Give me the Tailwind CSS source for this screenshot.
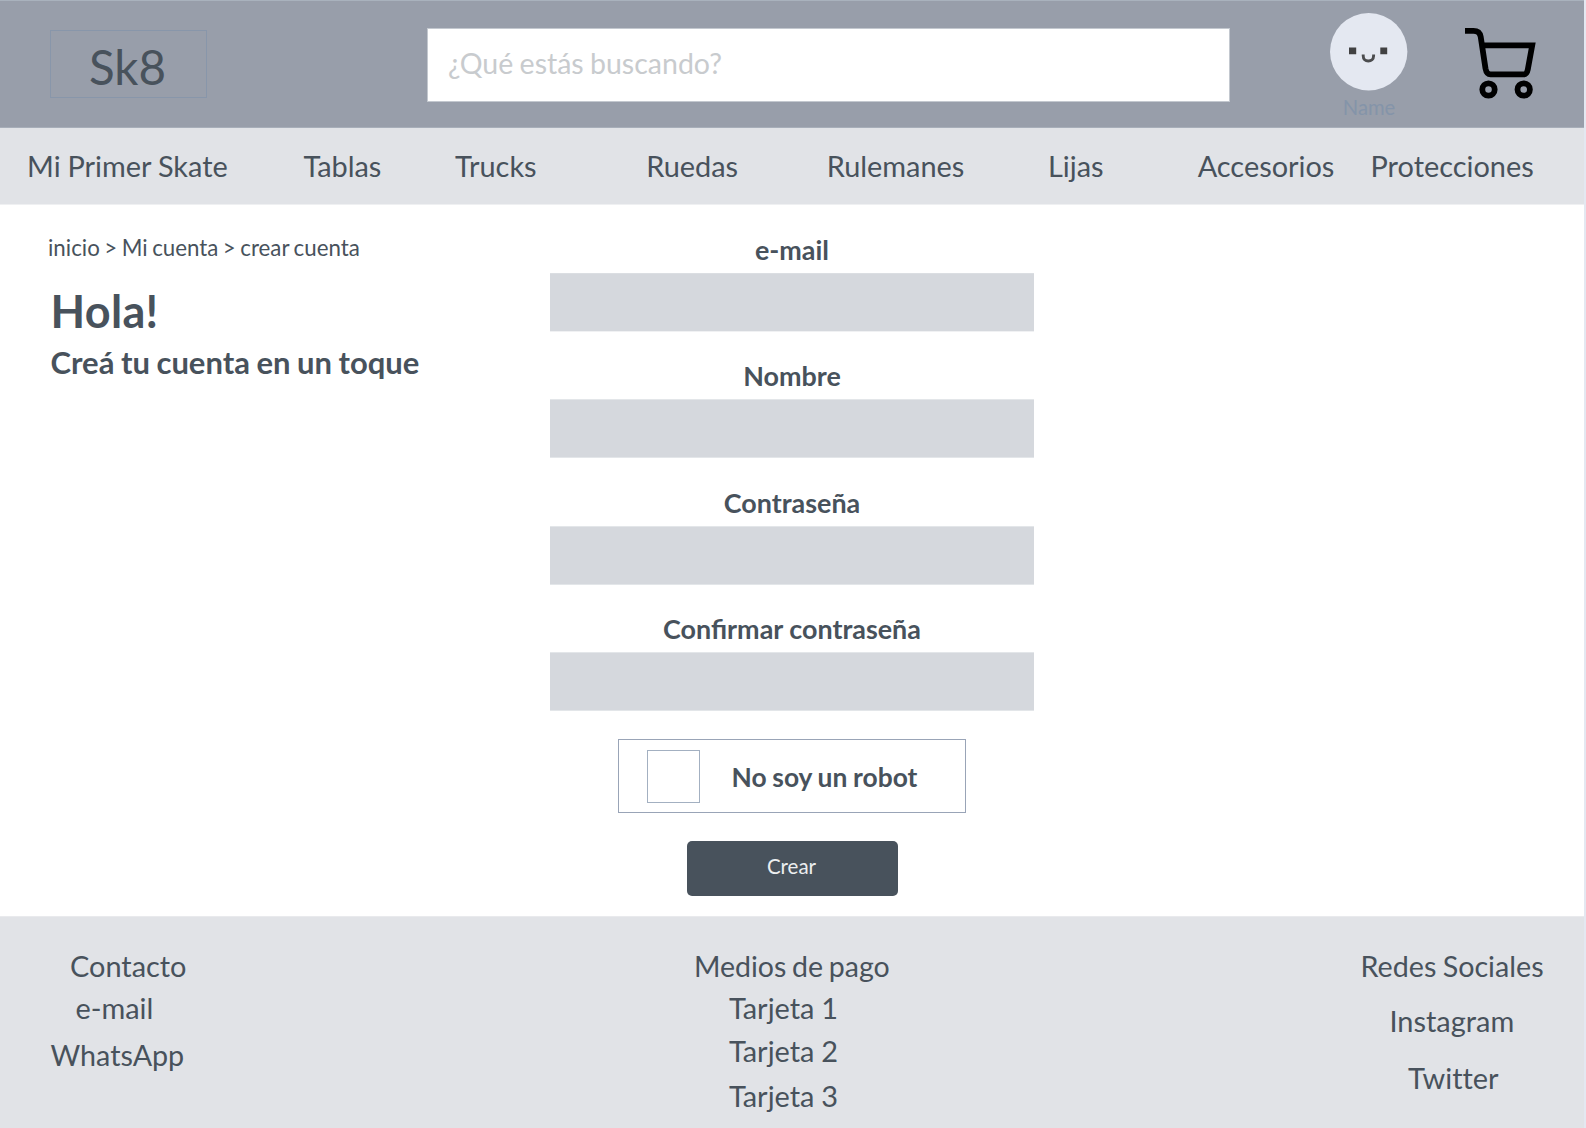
<!DOCTYPE html>
<html lang="es">
<head>
<meta charset="utf-8">
<title>Sk8 - Crear cuenta</title>
<script src="https://cdn.jsdelivr.net/npm/@tailwindcss/browser@4"></script>
</head>
<body class="h-[1128px] w-[1586px] overflow-hidden bg-[#e4e8f1] font-['Lato',sans-serif] text-[#48525c]">
<div class="flex h-full w-[1584px] flex-col bg-white">

  <header class="flex h-[128px] shrink-0 items-start border-y border-t-[#a9b2bd] border-b-[#a7aeb9] bg-[#989eaa]">
    <a class="mt-[29px] ml-[50px] flex h-[68px] w-[157px] items-center justify-center border border-[#8896aa] pt-[5px] pr-[2px] text-[47.5px] leading-none">Sk8</a>
    <div class="mt-[27px] ml-[220px] flex h-[74px] w-[803px] items-center border border-[#c3c8cf] bg-white pb-[3px] pl-[20px] text-[28.5px] leading-none whitespace-nowrap text-[#c8cbce] [word-spacing:-1px]">¿Qué estás buscando?</div>
    <div class="mt-[12px] ml-[100px] flex w-[78px] flex-col items-center">
      <svg class="size-[78px]" viewBox="0 0 78 78" fill="none">
        <circle cx="38.7" cy="38.7" r="38.7" fill="#e4e8f1"/>
        <path d="M19 34.5h7.2v6.7H19zM50.3 34.5h6.9v6.7h-6.9z" fill="#414142"/>
        <path d="M33.200 41.500v1.200c0 3.400 2.200 5.300 5.100 5.300s5.300-1.900 5.300-5.300v-1.200" stroke="#4b4c4e" stroke-width="2.900"/>
      </svg>
      <span class="mt-[6px] text-[20.2px] leading-5 text-[#8494a9]">Name</span>
    </div>
    <svg class="mt-[27px] ml-[57px] h-[71px] w-[71px]" viewBox="0 0 71 71" fill="none" stroke="#000" stroke-width="5.800">
      <path d="M0 2.900h8.500C13 2.900 15 4.700 15.700 8.800L20.500 40.500Q21.600 46.400 25.500 46.400H59Q61.800 46.400 62.800 41.500L67.200 17.400H17"/>
      <circle cx="23.500" cy="61.500" r="6.200"/>
      <circle cx="58.700" cy="61.500" r="6.200"/>
    </svg>
  </header>

  <nav class="grid h-[77px] shrink-0 grid-cols-[276.300px_151.700px_191.100px_180.500px_221.300px_149.700px_172.900px_1fr] items-center border-b border-[#eff0f2] bg-[#e1e3e7] text-[28.9px] leading-none whitespace-nowrap pl-[27.100px]">
    <a class="[word-spacing:-0.5px]">Mi Primer Skate</a><a>Tablas</a><a>Trucks</a><a>Ruedas</a><a>Rulemanes</a><a>Lijas</a><a>Accesorios</a><a>Protecciones</a>
  </nav>

  <main class="flex h-[711px] shrink-0">
    <section class="w-[550px] whitespace-nowrap">
      <p class="mt-[31px] ml-[48px] text-[22.300px] leading-[23px] [word-spacing:-1.200px]">inicio &gt; Mi cuenta &gt; crear cuenta</p>
      <h1 class="mt-[29px] ml-[50.500px] text-[45px] leading-[46px] font-bold tracking-[0.300px]">Hola!</h1>
      <h2 class="mt-[12px] ml-[50.500px] text-[31px] leading-[32px] font-bold [word-spacing:-1px]">Creá tu cuenta en un toque</h2>
    </section>
    <form class="flex w-[484px] flex-col items-center text-[26.900px] leading-[28px] font-bold">
      <label class="mt-[31px]">e-mail</label>
      <div class="mt-[9px] h-[59px] w-full border-y border-t-[#dbdee2] border-b-[#f0f1f3] bg-[#d5d8dd]"></div>
      <label class="mt-[30px]">Nombre</label>
      <div class="mt-[9px] h-[59px] w-full border-y border-[#e3e6e9] bg-[#d5d8dd]"></div>
      <label class="mt-[31px]">Contraseña</label>
      <div class="mt-[9px] h-[59px] w-full border-y border-[#e3e6e9] bg-[#d5d8dd]"></div>
      <label class="mt-[30px]">Confirmar contraseña</label>
      <div class="mt-[9px] h-[59px] w-full border-y border-[#e3e6e9] bg-[#d5d8dd]"></div>
      <div class="mt-[28px] flex h-[74px] w-[348px] items-center border border-[#99a4b7] pl-[28px]">
        <span class="mt-[1px] size-[53px] border border-[#a3b0c1]"></span>
        <span class="ml-[31.500px] pt-[2px] text-[26.400px] whitespace-nowrap [word-spacing:-0.700px]">No soy un robot</span>
      </div>
      <button type="button" class="mt-[28px] flex h-[55px] w-[211px] items-center justify-center rounded-[5px] bg-[#48525c] pr-[1px] pb-[5px] text-[20.500px] leading-none font-normal text-[#eceef0]">Crear</button>
    </form>
  </main>

  <footer class="flex h-[212px] shrink-0 items-start border-t border-[#e9eaed] bg-[#e1e3e7] text-[28.900px] leading-[30px] whitespace-nowrap">
    <ul class="w-[694px] pt-[34px]">
      <li class="pl-[70px]">Contacto</li>
      <li class="mt-[12px] pl-[75.500px]">e-mail</li>
      <li class="mt-[17px] pl-[50.500px] text-[28.700px]">WhatsApp</li>
    </ul>
    <ul class="w-[667px] pt-[34px]">
      <li class="text-[28.500px] [word-spacing:-1.600px]">Medios de pago</li>
      <li class="mt-[12px] pl-[35px] [word-spacing:-0.500px]">Tarjeta 1</li>
      <li class="mt-[13px] pl-[35px] [word-spacing:-0.500px]">Tarjeta 2</li>
      <li class="mt-[15px] pl-[35px] [word-spacing:-0.500px]">Tarjeta 3</li>
    </ul>
    <ul class="w-[184px] pt-[34px]">
      <li class="-ml-[0.500px] text-[28.700px] [word-spacing:-1px]">Redes Sociales</li>
      <li class="mt-[25px] pl-[28.500px]">Instagram</li>
      <li class="mt-[27px] pl-[47px] [font-variant-ligatures:none]">Twitter</li>
    </ul>
  </footer>
</div>
</body>
</html>
